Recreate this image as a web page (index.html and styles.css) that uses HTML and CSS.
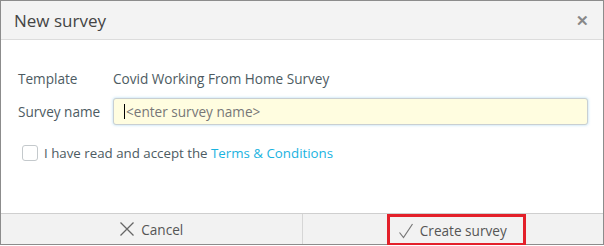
FILE: index.html
```html
<!DOCTYPE html>
<html>
<head>
<meta charset="utf-8">
<link rel="stylesheet" href="styles.css">
</head>
<body>
<div class="dialog">
  <div class="header">
    <span class="title">New survey</span>
    <span class="close">&#x2715;</span>
  </div>
  <div class="content">
    <div class="row">
      <span class="label">Template</span>
      <span class="value">Covid Working From Home Survey</span>
    </div>
    <div class="row">
      <span class="label">Survey name</span>
      <div class="input"><span class="caret"></span><span class="ph">&lt;enter survey name&gt;</span></div>
    </div>
    <div class="check-row">
      <span class="checkbox"></span>
      <span class="check-text">I have read and accept the <a class="link">Terms &amp; Conditions</a></span>
    </div>
  </div>
  <div class="footer">
    <div class="btn-cell">
      <span class="btn">
        <svg width="16" height="16" viewBox="0 0 16 16"><path d="M1.5 1.5 L14.5 14.5 M14.5 1.5 L1.5 14.5" stroke="#666" stroke-width="1.3" fill="none"/></svg>
        Cancel
      </span>
    </div>
    <div class="btn-cell divider">
      <span class="btn primary">
        <svg width="16" height="16" viewBox="0 0 16 16"><path d="M1.5 9.5 L5.5 14.5 L14.5 1" stroke="#777" stroke-width="1.2" fill="none"/></svg>
        Create survey
      </span>
    </div>
  </div>
</div>
</body>
</html>
```
FILE: styles.css
```css
html, body {
  margin: 0;
  padding: 0;
  background: #fff;
}
body {
  font-family: "Open Sans", "Liberation Sans", sans-serif;
  color: #4d5b62;
}
.dialog {
  width: 602px;
  height: 243px;
  border: 1px solid #8c8c8c;
  display: flex;
  flex-direction: column;
  background: #fff;
}
.header {
  height: 38px;
  background: #f3f3f3;
  border-bottom: 1px solid #dcdcdc;
  display: flex;
  align-items: center;
  justify-content: space-between;
  padding: 0 14px 0 13px;
  flex: none;
}
.title {
  font-size: 17px;
  color: #444;
}
.close {
  font-size: 15px;
  font-weight: bold;
  color: #888;
}
.content {
  flex: 1;
  padding: 25px 15px 0 17px;
}
.row {
  display: flex;
  align-items: center;
  min-height: 27px;
  margin-bottom: 6px;
  font-size: 13.6px;
}
.label {
  width: 95px;
  flex: none;
}
.value {
  color: #4d5b62;
}
.input {
  flex: 1;
  height: 25px;
  background: #fffde0;
  border: 1px solid #c9cfd2;
  border-radius: 3px;
  box-shadow: 0 0 3px rgba(120, 190, 230, 0.6);
  display: flex;
  align-items: center;
  padding-left: 10px;
}
.caret {
  width: 1px;
  height: 15px;
  background: #000;
  margin-right: 1px;
}
.ph {
  color: #777;
}
.check-row {
  display: flex;
  align-items: center;
  margin-top: 19px;
  padding-left: 4px;
  font-size: 13.3px;
}
.checkbox {
  width: 14px;
  height: 14px;
  border: 1px solid #c4c9cc;
  border-radius: 3px;
  margin-right: 6px;
}
.link {
  color: #1ab3df;
}
.footer {
  height: 30px;
  border-top: 1px solid #cfcfcf;
  background: #f2f2f2;
  display: flex;
  flex: none;
}
.btn-cell {
  flex: 1;
  display: flex;
  align-items: center;
  justify-content: center;
}
.divider {
  border-left: 1px solid #d6d6d6;
}
.btn {
  display: flex;
  align-items: center;
  gap: 6px;
  font-size: 13.6px;
  color: #555;
}
.btn.primary {
  border: 3px solid #e3202a;
  padding: 4px 16px 3px 8px;
  margin-top: 2px;
  margin-left: 7px;
}
```
